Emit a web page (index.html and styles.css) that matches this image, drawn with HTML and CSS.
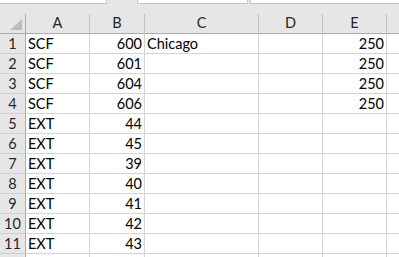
FILE: index.html
```html
<!DOCTYPE html>
<html lang="en">
<head>
<meta charset="utf-8">
<title>Sheet1</title>
<link rel="stylesheet" href="styles.css">
</head>
<body>
<div class="ribbon">
  <div class="field field-name"></div>
  <div class="field field-mid"></div>
  <div class="field field-formula"></div>
</div>
<div class="sheet">
  <div class="hd corner"><svg class="tri" width="13" height="12" viewBox="0 0 13 12"><path d="M12 0 L12 11 L0 11 Z" fill="#bdbdbd"/></svg></div>
  <div class="hd col">A</div><div class="hd col">B</div><div class="hd col">C</div><div class="hd col">D</div><div class="hd col">E</div><div class="hd col last"></div>

  <div class="rn">1</div><div class="c">SCF</div><div class="c n">600</div><div class="c">Chicago</div><div class="c"></div><div class="c n">250</div><div class="c last"></div>
  <div class="rn">2</div><div class="c">SCF</div><div class="c n">601</div><div class="c"></div><div class="c"></div><div class="c n">250</div><div class="c last"></div>
  <div class="rn">3</div><div class="c">SCF</div><div class="c n">604</div><div class="c"></div><div class="c"></div><div class="c n">250</div><div class="c last"></div>
  <div class="rn">4</div><div class="c">SCF</div><div class="c n">606</div><div class="c"></div><div class="c"></div><div class="c n">250</div><div class="c last"></div>
  <div class="rn">5</div><div class="c">EXT</div><div class="c n">44</div><div class="c"></div><div class="c"></div><div class="c"></div><div class="c last"></div>
  <div class="rn">6</div><div class="c">EXT</div><div class="c n">45</div><div class="c"></div><div class="c"></div><div class="c"></div><div class="c last"></div>
  <div class="rn">7</div><div class="c">EXT</div><div class="c n">39</div><div class="c"></div><div class="c"></div><div class="c"></div><div class="c last"></div>
  <div class="rn">8</div><div class="c">EXT</div><div class="c n">40</div><div class="c"></div><div class="c"></div><div class="c"></div><div class="c last"></div>
  <div class="rn">9</div><div class="c">EXT</div><div class="c n">41</div><div class="c"></div><div class="c"></div><div class="c"></div><div class="c last"></div>
  <div class="rn">10</div><div class="c">EXT</div><div class="c n">42</div><div class="c"></div><div class="c"></div><div class="c"></div><div class="c last"></div>
  <div class="rn">11</div><div class="c">EXT</div><div class="c n">43</div><div class="c"></div><div class="c"></div><div class="c"></div><div class="c last"></div>
  <div class="rn"></div><div class="c"></div><div class="c"></div><div class="c"></div><div class="c"></div><div class="c"></div><div class="c last"></div>
</div>
</body>
</html>
```
FILE: styles.css
```css
html, body {
  margin: 0;
  padding: 0;
  background: #ffffff;
  overflow: hidden;
}

body {
  font-family: Lato, "Liberation Sans", sans-serif;
  font-size: 14.5px;
  color: #000;
}

/* strip above the column headers, with the bottoms of the input boxes */
.ribbon {
  height: 14px;
  background: #e6e6e6;
  display: flex;
  align-items: flex-start;
}

.field {
  height: 3px;
  background: #fff;
  border: 1px solid #c6c6c6;
  border-top: none;
}

.field-name {
  width: 106px;
  border-left: none;
}

.field-mid {
  margin-left: 30px;
  width: 109px;
}

.field-formula {
  margin-left: 2px;
  flex: 1;
  border-right: none;
}

/* grid of cells */
.sheet {
  display: grid;
  grid-template-columns: 26px 64px 55px 114px 64px 64px 1fr;
  grid-auto-rows: 20px;
}

.sheet > div {
  box-sizing: border-box;
  border-right: 1px solid #d4d4d4;
  border-bottom: 1px solid #d4d4d4;
  display: flex;
  align-items: flex-end;
  line-height: 16px;
  padding-bottom: 1px;
  white-space: nowrap;
  overflow: hidden;
}

.sheet > .hd {
  background: #e6e6e6;
  border-right-color: #c2c2c2;
  border-bottom-color: #ababab;
  justify-content: center;
  color: #262626;
  padding-bottom: 2px;
}

.sheet > .corner {
  position: relative;
  border-right-color: #ababab;
}

.tri {
  position: absolute;
  left: 10px;
  top: 5px;
}

.sheet > .hd.last,
.sheet > .c.last {
  border-right: none;
}

.sheet > .rn {
  background: #e6e6e6;
  border-right-color: #ababab;
  border-bottom-color: #d0d0d0;
  justify-content: center;
  color: #262626;
}

.sheet > .c {
  padding-left: 2px;
  padding-right: 2px;
}

.sheet > .c.n {
  justify-content: flex-end;
}
```
